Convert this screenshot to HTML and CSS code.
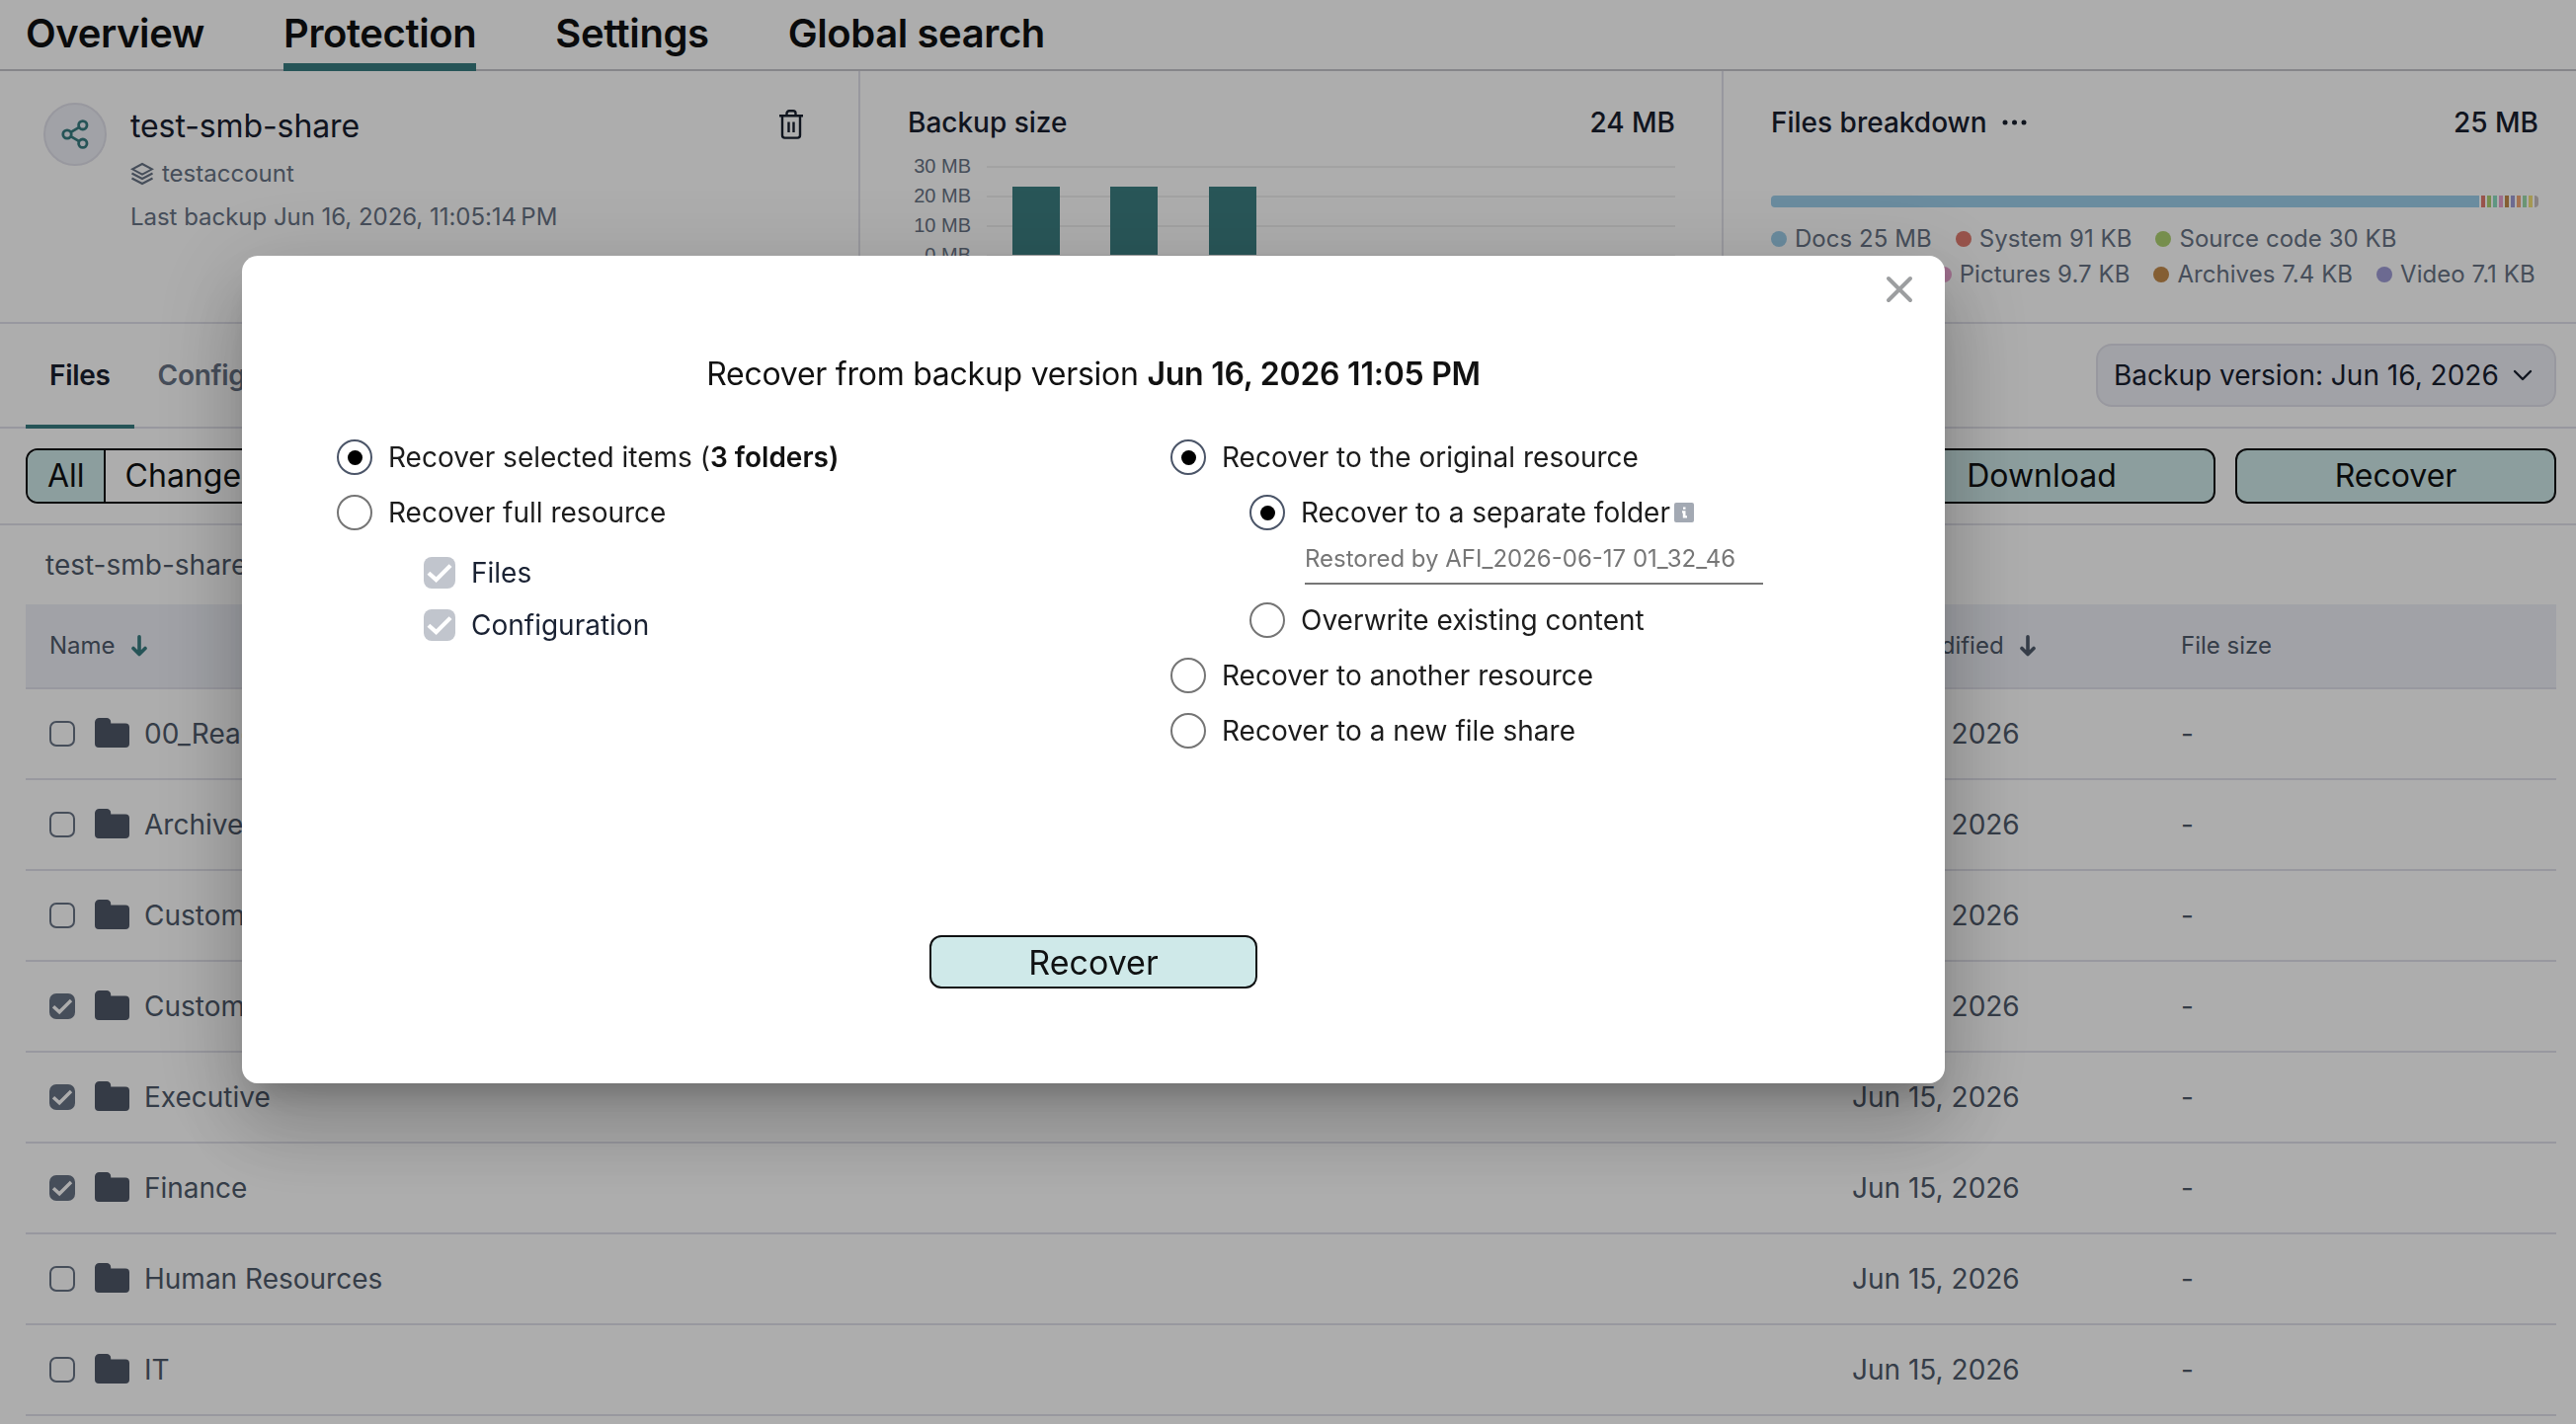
FILE: index.html
```html
<!DOCTYPE html>
<html lang="en">
<head>
    <meta charset="UTF-8">
    <meta name="viewport" content="width=device-width, initial-scale=1.0">
    <title>Protection</title>
    <link rel="stylesheet" href="styles.css">
</head>
<body>
    <svg width="0" height="0" class="sprite">
        <symbol id="folder" viewBox="0 0 36 30">
            <path d="M4.500 0H12a4.200 4.200 0 0 1 4.200 4.200V5.500H31a4 4 0 0 1 4 4V26a4 4 0 0 1-4 4H4a4 4 0 0 1-4-4V4.500A4.500 4.500 0 0 1 4.500 0z" fill="currentColor"/>
        </symbol>
        <symbol id="check" viewBox="0 0 26 26">
            <path d="M4 13.200l6.200 5.600L22 7" fill="none" stroke="#fff" stroke-width="3.400"/>
        </symbol>
        <symbol id="arrow" viewBox="0 0 16 22">
            <path d="M8 1.800V19M2 13.500l6 6 6-6" fill="none" stroke="currentColor" stroke-width="3.600" stroke-linecap="round" stroke-linejoin="round"/>
        </symbol>
    </svg>

    <nav class="nav">
        <a class="nav-link">Overview</a>
        <a class="nav-link active">Protection</a>
        <a class="nav-link">Settings</a>
        <a class="nav-link">Global search</a>
    </nav>

    <section class="summary">
        <div class="resource">
            <div class="avatar">
                <svg width="28" height="30" viewBox="0 0 28 30" fill="none" stroke="currentColor" stroke-width="2.800">
                    <circle cx="6" cy="15" r="4.200"/>
                    <circle cx="21.800" cy="5.800" r="4.200"/>
                    <circle cx="21.800" cy="24.200" r="4.200"/>
                    <path d="M9.700 12.900l8.500-5M9.700 17.100l8.500 5"/>
                </svg>
            </div>
            <div class="resource-info">
                <div class="resource-name">test-smb-share</div>
                <div class="resource-account">
                    <svg width="24" height="24" viewBox="0 0 24 24" fill="none" stroke="currentColor" stroke-width="2">
                        <path d="M12 2L22 7.300 12 12.600 2 7.300z"/>
                        <path d="M1.500 11.500L12 17l10.500-5.500M1.500 16.500L12 22l10.500-5.500"/>
                    </svg>
                    testaccount
                </div>
                <div class="resource-date">Last backup Jun 16, 2026, 11:05:14&#8239;PM</div>
            </div>
            <svg class="trash" width="24" height="30" viewBox="0 0 24 30" fill="none" stroke="currentColor" stroke-width="2.400">
                <path d="M0 6.200h24M7.500 6V3.800a2.500 2.500 0 0 1 2.500-2.500h4a2.500 2.500 0 0 1 2.500 2.500V6M3 6.500V26a2.600 2.600 0 0 0 2.600 2.600h12.800A2.600 2.600 0 0 0 21 26V6.500M9.500 12.500v10.500M14.500 12.500v10.500"/>
            </svg>
        </div>

        <div class="panel backup">
            <div class="panel-head"><span>Backup size</span><span>24 MB</span></div>
            <div class="chart">
                <div class="chart-labels"><span>30 MB</span><span>20 MB</span><span>10 MB</span><span>0 MB</span></div>
                <div class="chart-plot">
                    <i class="bar"></i><i class="bar"></i><i class="bar"></i>
                </div>
            </div>
        </div>

        <div class="panel breakdown">
            <div class="panel-head">
                <span>Files breakdown
                    <svg class="dots" width="26" height="6" viewBox="0 0 26 6" fill="currentColor"><circle cx="3" cy="3" r="2.500"/><circle cx="12.500" cy="3" r="2.500"/><circle cx="22" cy="3" r="2.500"/></svg>
                </span>
                <span>25 MB</span>
            </div>
            <div class="stack">
                <i class="docs"></i><i class="system"></i><i class="source"></i><i class="text"></i><i class="pictures"></i><i class="archives"></i><i class="video"></i><i class="audio"></i><i class="mail"></i><i class="data"></i><i class="other"></i>
            </div>
            <div class="legend">
                <span><i class="docs"></i>Docs 25 MB</span>
                <span><i class="system"></i>System 91 KB</span>
                <span><i class="source"></i>Source code 30 KB</span>
            </div>
            <div class="legend">
                <span><i class="text"></i>Text 12 KB</span>
                <span><i class="pictures"></i>Pictures 9.7 KB</span>
                <span><i class="archives"></i>Archives 7.4 KB</span>
                <span><i class="video"></i>Video 7.1 KB</span>
            </div>
        </div>
    </section>

    <section class="tabs">
        <a class="tab active">Files</a>
        <a class="tab">Configuration</a>
        <div class="version">
            Backup version: Jun 16, 2026
            <svg width="20" height="12" viewBox="0 0 20 12" fill="none" stroke="currentColor" stroke-width="2.400" stroke-linecap="round" stroke-linejoin="round"><path d="M2 2l8 8 8-8"/></svg>
        </div>
    </section>

    <section class="toolbar">
        <div class="filter">
            <span class="filter-item active">All</span>
            <span class="filter-item">Changed</span>
        </div>
        <button class="btn download" type="button">Download</button>
        <button class="btn restore" type="button">Recover</button>
    </section>

    <div class="crumb">test-smb-share</div>

    <div class="table">
        <div class="row head">
            <span class="cell">Name <svg class="teal" width="16" height="22"><use href="#arrow"/></svg></span>
            <span class="cell">Last modified <svg width="16" height="22"><use href="#arrow"/></svg></span>
            <span class="cell">File size</span>
        </div>
        <div class="row">
            <span class="cell"><i class="box"></i><svg class="folder" width="36" height="30"><use href="#folder"/></svg>00_Readme</span>
            <span>Jun 15, 2026</span><span>-</span>
        </div>
        <div class="row">
            <span class="cell"><i class="box"></i><svg class="folder" width="36" height="30"><use href="#folder"/></svg>Archive</span>
            <span>Jun 15, 2026</span><span>-</span>
        </div>
        <div class="row">
            <span class="cell"><i class="box"></i><svg class="folder" width="36" height="30"><use href="#folder"/></svg>Custom Apps</span>
            <span>Jun 15, 2026</span><span>-</span>
        </div>
        <div class="row">
            <span class="cell"><i class="box checked"><svg width="26" height="26"><use href="#check"/></svg></i><svg class="folder" width="36" height="30"><use href="#folder"/></svg>Customers</span>
            <span>Jun 15, 2026</span><span>-</span>
        </div>
        <div class="row">
            <span class="cell"><i class="box checked"><svg width="26" height="26"><use href="#check"/></svg></i><svg class="folder" width="36" height="30"><use href="#folder"/></svg>Executive</span>
            <span>Jun 15, 2026</span><span>-</span>
        </div>
        <div class="row">
            <span class="cell"><i class="box checked"><svg width="26" height="26"><use href="#check"/></svg></i><svg class="folder" width="36" height="30"><use href="#folder"/></svg>Finance</span>
            <span>Jun 15, 2026</span><span>-</span>
        </div>
        <div class="row">
            <span class="cell"><i class="box"></i><svg class="folder" width="36" height="30"><use href="#folder"/></svg>Human Resources</span>
            <span>Jun 15, 2026</span><span>-</span>
        </div>
        <div class="row">
            <span class="cell"><i class="box"></i><svg class="folder" width="36" height="30"><use href="#folder"/></svg>IT</span>
            <span>Jun 15, 2026</span><span>-</span>
        </div>
    </div>

    <div class="overlay"></div>
    <div class="modal">
        <svg class="close" width="28" height="28" viewBox="0 0 28 28" fill="none" stroke="#9c9ea0" stroke-width="4" stroke-linecap="round"><path d="M3 3l22 22M25 3L3 25"/></svg>
        <h2 class="modal-title">Recover from backup version <b>Jun 16, 2026 11:05 PM</b></h2>
        <div class="options">
            <div class="options-col">
                <label class="radio checked"><i></i><span>Recover selected items (<b>3 folders)</b></span></label>
                <label class="radio"><i></i><span>Recover full resource</span></label>
                <div class="checks">
                    <label class="check"><i><svg width="32" height="32"><use href="#check"/></svg></i>Files</label>
                    <label class="check"><i><svg width="32" height="32"><use href="#check"/></svg></i>Configuration</label>
                </div>
            </div>
            <div class="options-col">
                <label class="radio checked"><i></i><span>Recover to the original resource</span></label>
                <div class="nested">
                    <label class="radio checked"><i></i><span>Recover to a separate folder</span>
                        <svg class="info" width="20" height="20" viewBox="0 0 20 20"><rect width="20" height="20" rx="2" fill="#a3a9b3"/><path d="M9 4.500h2.500v2.300H9zM8 8.300h3.500v5H13v2.200H8.800v-5H8z" fill="#fff"/></svg>
                    </label>
                    <div class="folder-name">Restored by AFI_2026-06-17 01_32_46</div>
                    <label class="radio"><i></i><span>Overwrite existing content</span></label>
                </div>
                <label class="radio"><i></i><span>Recover to another resource</span></label>
                <label class="radio"><i></i><span>Recover to a new file share</span></label>
            </div>
        </div>
        <button class="btn submit" type="button">Recover</button>
    </div>
</body>
</html>
```
FILE: styles.css
```css
* {
    box-sizing: border-box;
    margin: 0;
    padding: 0;
}

body {
    width: 2608px;
    height: 1442px;
    overflow: hidden;
    background: #fff;
    color: #18202f;
    font-family: Inter, sans-serif;
    font-size: 28px;
}

svg {
    display: block;
    flex: none;
}

.sprite {
    position: absolute;
}

/* top navigation */
.nav {
    display: flex;
    gap: 80px;
    height: 72px;
    padding-left: 26px;
    border-bottom: 2px solid #c6c6cc;
}

.nav-link {
    height: 72px;
    line-height: 68px;
    font-size: 40px;
    font-weight: 600;
    letter-spacing: -.4px;
    color: #0f1112;
}

.nav-link.active {
    border-bottom: 8px solid #387c80;
}

/* summary panels */
.summary {
    display: flex;
    height: 256px;
    border-bottom: 2px solid #e1e1ea;
}

.resource {
    display: flex;
    width: 869px;
    padding: 32px 56px 0 44px;
}

.avatar {
    display: flex;
    align-items: center;
    justify-content: center;
    width: 64px;
    height: 64px;
    border: 2px solid #e1e1ea;
    border-radius: 50%;
    background: #edeff6;
    color: #387c80;
}

.resource-info {
    flex: 1;
    margin-left: 24px;
    font-size: 24px;
    color: #687385;
}

.resource-name {
    font-size: 32px;
    line-height: 48px;
    letter-spacing: -.1px;
    color: #18202f;
}

.resource-account {
    display: flex;
    align-items: center;
    gap: 8px;
    height: 47px;
}

.resource-date {
    line-height: 42px;
    letter-spacing: -.03px;
}

.trash {
    margin-top: 7px;
}

.panel {
    border-left: 2px solid #e1e1ea;
    padding: 38px 47px 0 48px;
}

.backup {
    width: 874px;
}

.breakdown {
    flex: 1;
    padding-right: 38px;
}

.panel-head {
    display: flex;
    justify-content: space-between;
    line-height: 28px;
    font-weight: 500;
}

.dots {
    display: inline-block;
    margin-left: 8px;
    vertical-align: 7px;
}

.chart {
    display: flex;
    margin-top: 15px;
}

.chart-labels {
    display: flex;
    flex-direction: column;
    width: 80px;
    padding-right: 16px;
    text-align: right;
    font: 20px/30px "Liberation Sans", sans-serif;
    color: #687385;
}

.chart-plot {
    display: grid;
    grid-template-columns: repeat(7, 1fr);
    flex: 1;
    height: 107px;
    padding-top: 36px;
    justify-items: center;
    background: repeating-linear-gradient(#efefef 0 2px, transparent 2px 30px) 0 15px no-repeat;
}

.bar {
    width: 48px;
    height: 69px;
    background: #3c7f82;
}

.stack {
    display: flex;
    gap: 2px;
    height: 12px;
    margin: 60px 0 14px;
    border-radius: 4px;
    overflow: hidden;
}

.stack i {
    width: 4px;
}

.stack .docs {
    flex: 1;
}

.docs { background: #9dceea; }
.system { background: #e07b6f; }
.source { background: #aed272; }
.text { background: #8cdec0; }
.pictures { background: #e8a2cf; }
.archives { background: #c38b4c; }
.video { background: #a09dd6; }
.audio { background: #f2a878; }
.mail { background: #9cdcab; }
.data { background: #f3e07a; }
.other { background: #cbc1c1; }

.legend {
    display: flex;
    gap: 24px;
    font-size: 24px;
    line-height: 36px;
    letter-spacing: .05px;
    white-space: nowrap;
    color: #687385;
}

.legend span {
    display: flex;
    align-items: center;
    gap: 8px;
}

.legend i {
    width: 16px;
    height: 16px;
    border-radius: 50%;
}

/* tabs */
.tabs {
    display: flex;
    height: 106px;
    padding: 0 20px 0 26px;
    border-bottom: 2px solid #e1e1ea;
}

.tab {
    height: 106px;
    padding: 0 24px;
    line-height: 104px;
    font-weight: 600;
    letter-spacing: -.3px;
    color: #687385;
}

.tab.active {
    border-bottom: 4px solid #387c80;
    color: #18202f;
}

.version {
    display: flex;
    align-items: center;
    justify-content: space-between;
    width: 466px;
    height: 64px;
    margin: 20px 0 0 auto;
    padding: 0 22px 0 16px;
    border: 2px solid #e1e1ea;
    border-radius: 16px;
    background: #edeff6;
}

/* toolbar */
.toolbar {
    display: flex;
    align-items: center;
    gap: 20px;
    height: 98px;
    padding: 0 20px 0 26px;
    border-bottom: 2px solid #e1e1ea;
}

.filter {
    display: flex;
    height: 56px;
    margin-right: auto;
    border: 2px solid #0f1112;
    border-radius: 12px;
    overflow: hidden;
    font-size: 32px;
    line-height: 51px;
    color: #0f1112;
}

.filter-item {
    padding: 0 20px;
}

.filter-item.active {
    padding-right: 19px;
    border-right: 2px solid #0f1112;
    background: #cfe9e9;
}

.btn {
    height: 56px;
    border: 2px solid #0f1112;
    border-radius: 12px;
    background: #cfe9e9;
    color: #0f1112;
    font: 32px/50px Inter, sans-serif;
}

.download {
    width: 352px;
}

.restore {
    width: 325px;
}

.crumb {
    padding-left: 46px;
    line-height: 80px;
    color: #4f5a6b;
}

/* files table */
.table {
    margin: 0 20px 0 26px;
}

.row {
    display: grid;
    grid-template-columns: 1fr 333px 380px;
    align-items: center;
    height: 92px;
    padding-left: 24px;
    border-bottom: 2px solid #e1e1ea;
    color: #4f5a6b;
}

.head {
    height: 86px;
    padding-bottom: 1px;
    background: #edeff6;
    font-size: 24px;
}

.cell {
    display: flex;
    align-items: center;
}

.head svg {
    margin-left: 16px;
}

.teal {
    color: #387c80;
}

.box {
    width: 26px;
    height: 26px;
    margin-right: 20px;
    border: 2px solid #687385;
    border-radius: 7px;
}

.box.checked {
    background: #687385;
}

.box svg {
    margin: -2px;
}

.folder {
    margin: -3px 14px 0 0;
    color: #4f5768;
}

/* recovery dialog */
.overlay {
    position: fixed;
    inset: 0;
    background: rgba(0, 0, 0, .32);
}

.modal {
    position: fixed;
    left: 245px;
    top: 259px;
    display: flex;
    flex-direction: column;
    width: 1724px;
    height: 838px;
    padding: 100px 96px 96px;
    border-radius: 16px;
    background: #fff;
    box-shadow: 0 22px 30px -14px rgba(0, 0, 0, .2), 0 48px 76px 6px rgba(0, 0, 0, .14), 0 18px 92px 16px rgba(0, 0, 0, .12);
    color: #1c1c1c;
}

.close {
    position: absolute;
    top: 20px;
    right: 32px;
}

.modal-title {
    margin-bottom: 36px;
    font-size: 32px;
    font-weight: 400;
    line-height: 40px;
    letter-spacing: -.25px;
    text-align: center;
    color: #111;
}

b {
    font-weight: 600;
    color: #111;
}

.options {
    display: grid;
    grid-template-columns: 844px 1fr;
}

.radio {
    display: flex;
    align-items: center;
    height: 56px;
}

.radio i {
    display: flex;
    align-items: center;
    justify-content: center;
    width: 36px;
    height: 36px;
    margin-right: 16px;
    border: 2px solid #757575;
    border-radius: 50%;
}

.radio.checked i {
    border-color: #4b5568;
}

.radio.checked i::after {
    content: "";
    width: 15px;
    height: 15px;
    border-radius: 50%;
    background: #000;
}

.checks {
    padding: 6px 0 0 88px;
}

.check {
    display: flex;
    align-items: center;
    height: 53px;
    color: #1a2233;
}

.check i {
    width: 32px;
    height: 32px;
    margin-right: 16px;
    border-radius: 8px;
    background: #c1c5cd;
}

.nested {
    padding-left: 80px;
}

.info {
    margin-left: 4px;
}

.folder-name {
    width: 464px;
    height: 45px;
    margin: 0 0 8px 56px;
    border-bottom: 2px solid #767676;
    font-size: 24px;
    line-height: 37px;
    color: #767676;
}

.submit {
    width: 332px;
    height: 54px;
    margin: auto auto 0;
    font-size: 34px;
    line-height: 52px;
}
```
